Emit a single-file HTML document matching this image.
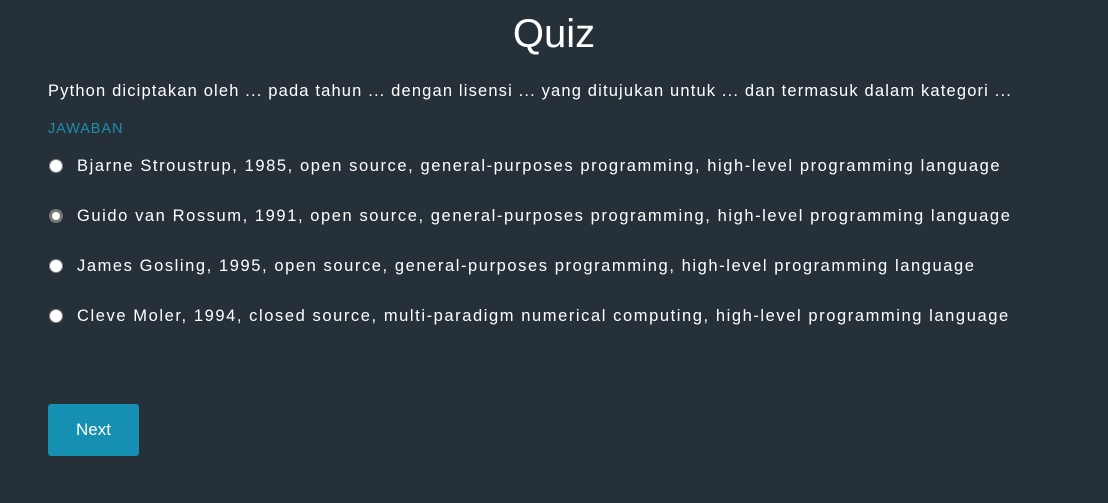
<!DOCTYPE html>
<html><head><style>
html,body{margin:0;padding:0;}
body{width:1108px;height:503px;background:#263038;color:#fff;font-family:"Liberation Sans",sans-serif;position:relative;overflow:hidden;}
.t{position:absolute;white-space:nowrap;}
h1{position:absolute;left:0;width:1108px;text-align:center;top:11px;margin:0;font-size:40px;font-weight:normal;line-height:46px;letter-spacing:0px;}
.q{left:48px;top:81px;font-size:16.5px;line-height:20px;letter-spacing:1.16px;}
.j{left:48px;top:121px;font-size:14.5px;line-height:16px;color:#1b8fad;letter-spacing:0.9px;}
.o{left:77px;font-size:16.5px;line-height:20px;letter-spacing:1.58px;}
.r{position:absolute;left:49px;width:12px;height:12px;border-radius:50%;background:#fff;border:1px solid #888;}
.r.s{background:#fff;border:3px solid #777;width:8px;height:8px;}
.btn{position:absolute;left:48px;top:404px;width:91px;height:52px;background:#1590b2;border-radius:3px;font-size:17px;line-height:52px;text-align:center;}
</style></head><body>
<h1>Quiz</h1>
<div class="t q">Python diciptakan oleh ... pada tahun ... dengan lisensi ... yang ditujukan untuk ... dan termasuk dalam kategori ...</div>
<div class="t j">JAWABAN</div>
<div class="r" style="top:159px"></div>
<div class="t o" style="top:156px">Bjarne Stroustrup, 1985, open source, general-purposes programming, high-level programming language</div>
<div class="r s" style="top:209px"></div>
<div class="t o" style="top:206px">Guido van Rossum, 1991, open source, general-purposes programming, high-level programming language</div>
<div class="r" style="top:259px"></div>
<div class="t o" style="top:256px">James Gosling, 1995, open source, general-purposes programming, high-level programming language</div>
<div class="r" style="top:309px"></div>
<div class="t o" style="top:306px">Cleve Moler, 1994, closed source, multi-paradigm numerical computing, high-level programming language</div>
<div class="btn">Next</div>
</body></html>
